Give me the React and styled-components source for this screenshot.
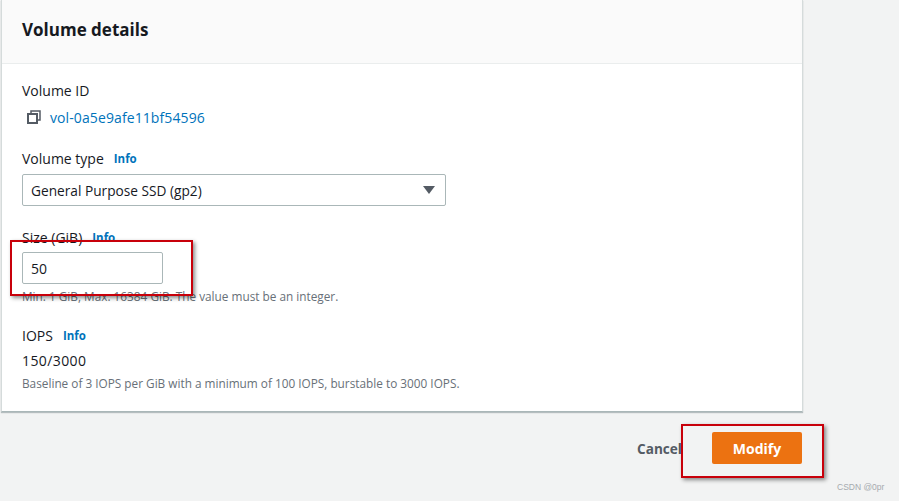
import React from 'react'
import styled, { createGlobalStyle } from 'styled-components'

const Global = createGlobalStyle`
  html, body { margin: 0; padding: 0; }
  body {
    width: 899px;
    height: 501px;
    overflow: hidden;
    background: #f2f3f3;
    font-family: "Open Sans", "Liberation Sans", sans-serif;
    color: #16191f;
  }
`

const Page = styled.div`
  position: relative;
  width: 899px;
  height: 501px;
  padding-left: 1px;
  box-sizing: border-box;
`

const Card = styled.section`
  width: 802px;
  height: 412px;
  background: #fff;
  box-sizing: border-box;
  border-left: 1px solid #d5dbdb;
  border-right: 1px solid #d5dbdb;
  border-bottom: 1px solid #aab7b8;
  box-shadow: 0 1px 1px rgba(0, 28, 36, 0.25);
`

const CardHeader = styled.header`
  height: 64px;
  box-sizing: border-box;
  background: #fafafa;
  border-bottom: 1px solid #eaeded;
  padding: 18px 20px 0;
  font-size: 17px;
  line-height: 24px;
  font-weight: 700;
`

const CardBody = styled.div`
  padding: 17px 20px 0;
  display: flex;
  flex-direction: column;
`

const Field = styled.div`
  margin-bottom: ${p => p.$gap || 0}px;
`

const Label = styled.div`
  display: flex;
  align-items: center;
  gap: 10px;
  font-size: 14px;
  line-height: 20px;
`

const InfoLink = styled.a`
  font-size: 11.5px;
  font-weight: 700;
  color: #0073bb;
`

const IdRow = styled.div`
  display: flex;
  align-items: center;
  gap: 9px;
  padding-left: 5px;
  margin-top: 6px;
  height: 20px;
`

const IdLink = styled.a`
  font-size: 14px;
  letter-spacing: 0.1px;
  color: #0073bb;
`

const Select = styled.div`
  width: 424px;
  height: 32px;
  margin-top: 5px;
  box-sizing: border-box;
  border: 1px solid #aab7b8;
  border-radius: 2px;
  background: #fff;
  padding: 0 10px 0 8px;
  display: flex;
  align-items: center;
  justify-content: space-between;
  font-size: 13.7px;
`

const Caret = styled.span`
  width: 0;
  height: 0;
  border-left: 6px solid transparent;
  border-right: 6px solid transparent;
  border-top: 8px solid #545b64;
`

const Input = styled.div`
  width: 141px;
  height: 32px;
  margin-top: 4px;
  box-sizing: border-box;
  border: 1px solid #aab7b8;
  border-radius: 2px;
  background: #fff;
  padding: 0 8px;
  display: flex;
  align-items: center;
  font-size: 14px;
`

const Hint = styled.div`
  font-size: 11.8px;
  line-height: 16px;
  color: #687078;
  margin-top: ${p => p.$top || 0}px;
`

const Value = styled.div`
  font-size: 14px;
  letter-spacing: 0.4px;
  line-height: 20px;
  margin-top: 5px;
`

const Actions = styled.div`
  width: 801px;
  box-sizing: border-box;
  display: flex;
  justify-content: flex-end;
  align-items: center;
  gap: 30px;
  margin-top: 20px;
`

const CancelLink = styled.a`
  font-size: 13.6px;
  font-weight: 700;
  color: #545b64;
`

const PrimaryButton = styled.button`
  width: 90px;
  height: 32px;
  border: none;
  border-radius: 2px;
  background: #ec7211;
  color: #fff;
  font: 700 14px "Open Sans", "Liberation Sans", sans-serif;
`

const Highlight = styled.div`
  position: absolute;
  box-sizing: border-box;
  border: 2px solid #c8000a;
  box-shadow: 2px 2px 4px rgba(0, 0, 0, 0.45);
  left: ${p => p.$x}px;
  top: ${p => p.$y}px;
  width: ${p => p.$w}px;
  height: ${p => p.$h}px;
`

const Watermark = styled.div`
  position: absolute;
  left: 837px;
  bottom: 9px;
  font: 8.5px "Liberation Sans", sans-serif;
  color: #a6aaae;
`

const CopyIcon = () => (
  <svg width="14" height="14" viewBox="0 0 14 14" fill="none" stroke="#545b64" strokeWidth="2">
    <rect x="1" y="4" width="9" height="9" />
    <path d="M4 3.5V1h9v9h-2.5" strokeWidth="1.5" />
  </svg>
)

export default function App() {
  return (
    <Page>
      <Global />
      <Card>
        <CardHeader>Volume details</CardHeader>
        <CardBody>
          <Field $gap={22}>
            <Label>Volume ID</Label>
            <IdRow>
              <CopyIcon />
              <IdLink>vol-0a5e9afe11bf54596</IdLink>
            </IdRow>
          </Field>
          <Field $gap={22}>
            <Label>Volume type <InfoLink>Info</InfoLink></Label>
            <Select>
              General Purpose SSD (gp2)
              <Caret />
            </Select>
          </Field>
          <Field $gap={22}>
            <Label>Size (GiB) <InfoLink>Info</InfoLink></Label>
            <Input>50</Input>
            <Hint $top={4}>Min: 1 GiB, Max: 16384 GiB. The value must be an integer.</Hint>
          </Field>
          <Field>
            <Label>IOPS <InfoLink>Info</InfoLink></Label>
            <Value>150/3000</Value>
            <Hint $top={4}>Baseline of 3 IOPS per GiB with a minimum of 100 IOPS, burstable to 3000 IOPS.</Hint>
          </Field>
        </CardBody>
      </Card>
      <Actions>
        <CancelLink>Cancel</CancelLink>
        <PrimaryButton>Modify</PrimaryButton>
      </Actions>
      <Highlight $x={10} $y={240} $w={183} $h={56} />
      <Highlight $x={681} $y={424} $w={143} $h={54} />
      <Watermark>CSDN @0pr</Watermark>
    </Page>
  )
}
